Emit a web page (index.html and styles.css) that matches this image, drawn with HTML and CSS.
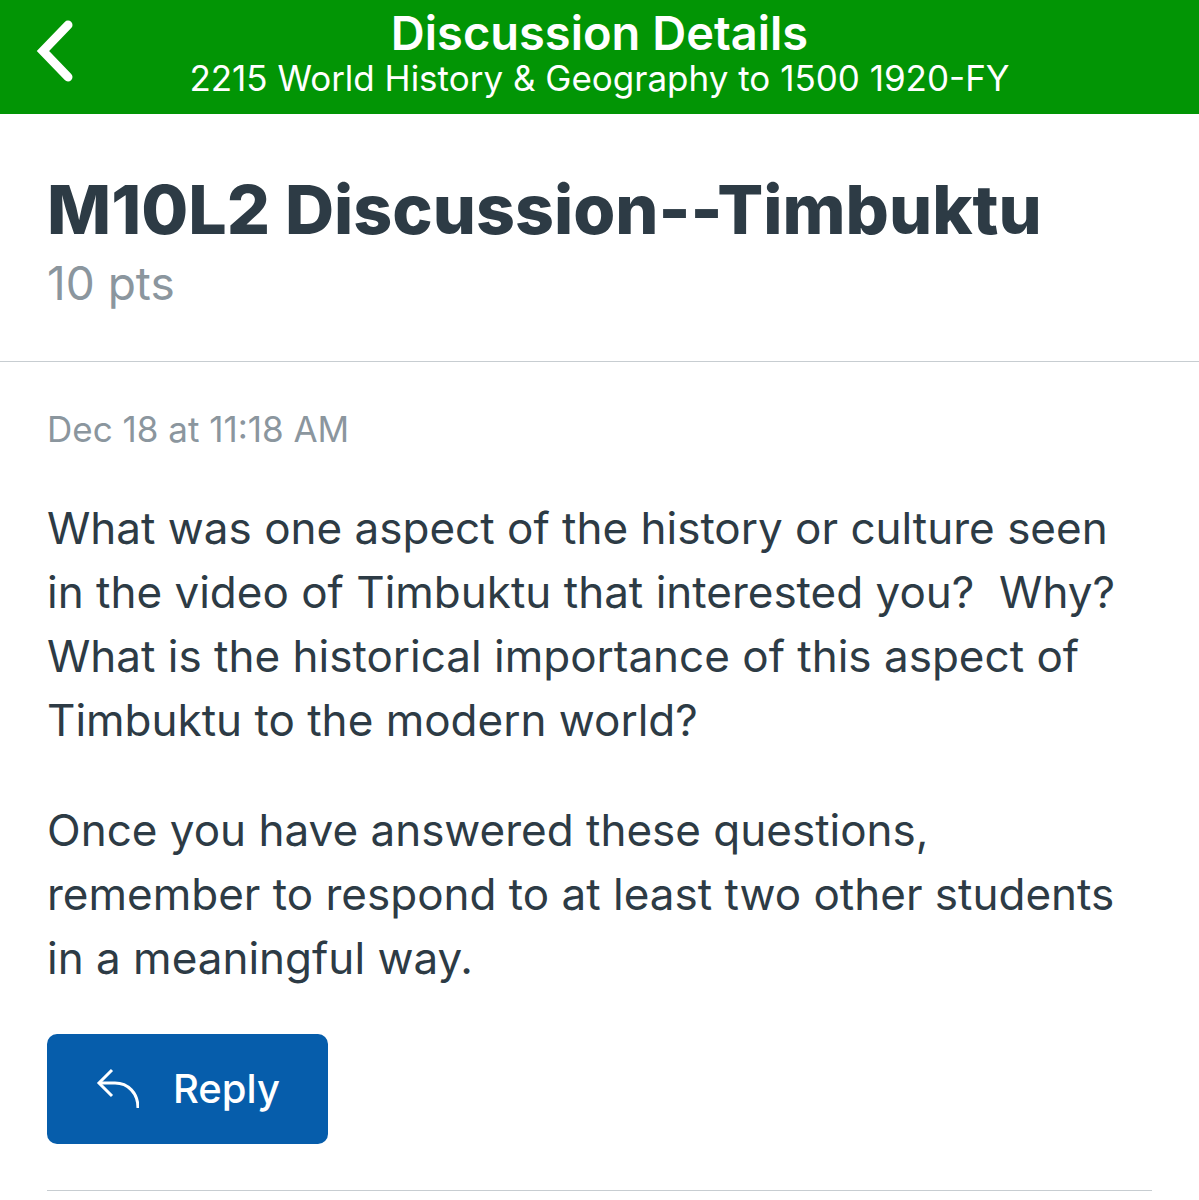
FILE: index.html
```html
<!DOCTYPE html>
<html lang="en">
<head>
    <meta charset="UTF-8">
    <meta name="viewport" content="width=device-width, initial-scale=1.0">
    <title>Discussion Details</title>
    <link rel="stylesheet" href="styles.css">
</head>
<body>
    <header class="navbar">
        <button class="back" type="button" aria-label="Back">
            <svg width="44" height="64" viewBox="0 0 44 64" fill="none" stroke="#ffffff" stroke-width="9" stroke-linecap="round" stroke-linejoin="miter">
                <path d="M36 7 L11 33 L36 59"/>
            </svg>
        </button>
        <div class="navbar-text">
            <div class="navbar-title">Discussion Details</div>
            <div class="navbar-course">2215 World History &amp; Geography to 1500 1920-FY</div>
        </div>
    </header>
    <main>
        <section class="topic">
            <h1>M10L2 Discussion--Timbuktu</h1>
            <div class="points">10 pts</div>
        </section>
        <section class="entry">
            <div class="date">Dec 18 at 11:18 AM</div>
            <div class="message">
                <p>What was one aspect of the history or culture seen in the video of Timbuktu that interested you?&nbsp; Why? What is the historical importance of this aspect of Timbuktu to the modern world?</p>
                <p>Once you have answered these questions, remember to respond to at least two other students in a meaningful way.</p>
            </div>
            <button class="reply" type="button">
                <svg width="44" height="44" viewBox="0 0 44 44" fill="none" stroke="#ffffff" stroke-width="3">
                    <path d="M17 3 L4 16 L17 29"/>
                    <path d="M4 16 H20 C33 16 43 26 43 41"/>
                </svg>
                Reply
            </button>
            <hr>
        </section>
    </main>
</body>
</html>
```

FILE: styles.css
```css
* {
    box-sizing: border-box;
}

body {
    margin: 0;
    font-family: Inter, "Liberation Sans", sans-serif;
    background-color: #ffffff;
    color: #2d3b45;
}

.navbar {
    position: relative;
    padding: 8px 0 16px;
    background-color: #029505;
    color: #ffffff;
    text-align: center;
}

/* sits over the bar so the title stays centred */
.back {
    position: absolute;
    left: 32px;
    top: 18px;
    padding: 0;
    border: none;
    background: none;
    cursor: pointer;
}

.back svg {
    display: block;
}

.navbar-title {
    font-size: 47px;
    line-height: 50px;
    font-weight: 600;
}

.navbar-course {
    font-size: 35px;
    line-height: 40px;
}

.topic {
    padding: 55px 47px 48px;
    border-bottom: 1px solid #c7cdd1;
}

h1 {
    margin: 0;
    font-size: 68px;
    line-height: 80px;
    font-weight: 800;
}

.points {
    margin-top: 4px;
    font-size: 46px;
    line-height: 60px;
    color: #8b969e;
}

.entry {
    padding: 47px 47px 0;
}

.date {
    font-size: 35px;
    line-height: 40px;
    color: #8b969e;
}

.message {
    margin: 47px 0 44px;
    font-size: 44px;
    line-height: 64px;
}

.message p {
    margin: 0 0 46px;
}

.message p:last-child {
    margin-bottom: 0;
}

.reply {
    display: flex;
    align-items: center;
    gap: 34px;
    padding: 24px 48px;
    border: none;
    border-radius: 10px;
    background-color: #065dab;
    color: #ffffff;
    font-family: inherit;
    font-size: 40px;
    line-height: 62px;
    font-weight: 500;
    cursor: pointer;
}

hr {
    margin: 46px 0 0;
    border: none;
    border-top: 1px solid #c7cdd1;
}
```
